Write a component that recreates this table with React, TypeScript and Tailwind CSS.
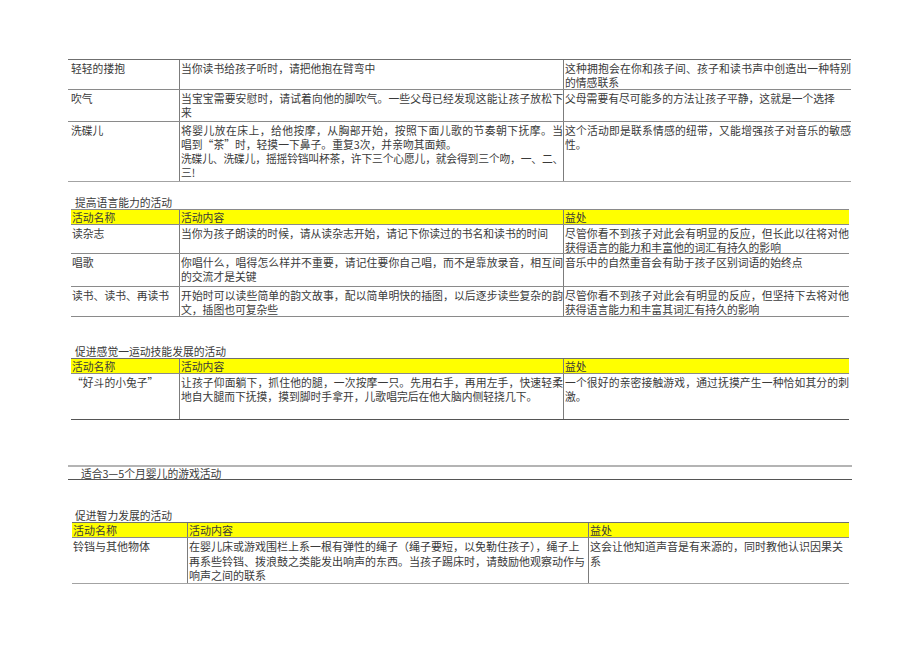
import React from "react";
import clsx from "clsx";

type Row = { h: string; cells: string[][] };

type TableSpec = {
  ml: string;
  widths: string[];
  pads: string[];
  top: string;
  bottom: string;
  text?: string;
  header?: boolean;
  rows: Row[];
  justify?: boolean;
};

const HEADER = [["活动名称"], ["活动内容"], ["益处"]];

// lines that need to be squeezed a bit to fit in the column
const TIGHT = new Set(["洗碟儿、洗碟儿，摇摇铃铛叫杯茶，许下三个心愿儿，就会得到三个吻，一、二、"]);
// short lines inside a paragraph, left as they are
const LOOSE = new Set(["唱到“茶”时，轻摸一下鼻子。重复3次，并亲吻其面颊。"]);

const table1: TableSpec = {
  ml: "ml-[68px]",
  widths: ["w-[112px]", "w-[384px]", "w-[287px]"],
  pads: ["pl-[3px]", "pl-[1px]", "pl-[1px]"],
  top: "border-[#6f6f6f]",
  bottom: "border-[#a3a3a3]",
  justify: true,
  rows: [
    {
      h: "h-[30px]",
      cells: [
        ["轻轻的搂抱"],
        ["当你读书给孩子听时，请把他抱在臂弯中"],
        ["这种拥抱会在你和孩子间、孩子和读书声中创造出一种特别", "的情感联系"],
      ],
    },
    {
      h: "h-[32px]",
      cells: [
        ["吹气"],
        ["当宝宝需要安慰时，请试着向他的脚吹气。一些父母已经发现这能让孩子放松下", "来"],
        ["父母需要有尽可能多的方法让孩子平静，这就是一个选择"],
      ],
    },
    {
      h: "h-[60px]",
      cells: [
        ["洗碟儿"],
        [
          "将婴儿放在床上，给他按摩，从胸部开始，按照下面儿歌的节奏朝下抚摩。当",
          "唱到“茶”时，轻摸一下鼻子。重复3次，并亲吻其面颊。",
          "洗碟儿、洗碟儿，摇摇铃铛叫杯茶，许下三个心愿儿，就会得到三个吻，一、二、",
          "三!",
        ],
        ["这个活动即是联系情感的纽带，又能增强孩子对音乐的敏感", "性。"],
      ],
    },
  ],
};

const table2: TableSpec = {
  ml: "ml-[71px]",
  widths: ["w-[109px]", "w-[384px]", "w-[285px]"],
  pads: ["pl-[1px]", "pl-[1px]", "pl-[1px]"],
  top: "border-[#8a8a8a]",
  bottom: "border-[#8a8a8a]",
  header: true,
  justify: true,
  rows: [
    {
      h: "h-[29px]",
      cells: [
        ["读杂志"],
        ["当你为孩子朗读的时候，请从读杂志开始，请记下你读过的书名和读书的时间"],
        ["尽管你看不到孩子对此会有明显的反应，但长此以往将对他", "获得语言的能力和丰富他的词汇有持久的影响"],
      ],
    },
    {
      h: "h-[33px]",
      cells: [
        ["唱歌"],
        ["你唱什么，唱得怎么样并不重要，请记住要你自己唱，而不是靠放录音，相互间", "的交流才是关键"],
        ["音乐中的自然重音会有助于孩子区别词语的始终点"],
      ],
    },
    {
      h: "h-[30px]",
      cells: [
        ["读书、读书、再读书"],
        ["开始时可以读些简单的韵文故事，配以简单明快的插图，以后逐步读些复杂的韵", "文，插图也可复杂些"],
        ["尽管你看不到孩子对此会有明显的反应，但坚持下去将对他", "获得语言能力和丰富其词汇有持久的影响"],
      ],
    },
  ],
};

const table3: TableSpec = {
  ml: "ml-[71px]",
  widths: ["w-[109px]", "w-[384px]", "w-[285px]"],
  pads: ["pl-[1px]", "pl-[1px]", "pl-[1px]"],
  top: "border-[#6f6f6f]",
  bottom: "border-[#555555]",
  header: true,
  justify: true,
  rows: [
    {
      h: "h-[46px]",
      cells: [
        ["“好斗的小兔子”"],
        [
          "让孩子仰面躺下，抓住他的腿，一次按摩一只。先用右手，再用左手，快速轻柔",
          "地自大腿而下抚摸，摸到脚时手拿开，儿歌唱完后在他大脑内侧轻挠几下。",
        ],
        ["一个很好的亲密接触游戏，通过抚摸产生一种恰如其分的刺", "激。"],
      ],
    },
  ],
};

const table4: TableSpec = {
  ml: "ml-[72px]",
  widths: ["w-[116px]", "w-[401px]", "w-[260px]"],
  pads: ["pl-[1px]", "pl-[1px]", "pl-[1px]"],
  top: "border-[#6f6f6f]",
  bottom: "border-[#a3a3a3]",
  text: "text-[11px] leading-[14.5px]",
  header: true,
  rows: [
    {
      h: "h-[46px]",
      cells: [
        ["铃铛与其他物体"],
        [
          "在婴儿床或游戏围栏上系一根有弹性的绳子（绳子要短，以免勒住孩子），绳子上",
          "再系些铃铛、拨浪鼓之类能发出响声的东西。当孩子踢床时，请鼓励他观察动作与",
          "响声之间的联系",
        ],
        ["这会让他知道声音是有来源的，同时教他认识因果关", "系"],
      ],
    },
  ],
};

function Cell({ w, pad, lines, last, justify }: { w: string; pad: string; lines: string[]; last: boolean; justify?: boolean }) {
  return (
    <div className={clsx(w, pad, "shrink-0 pt-[1px]", !last && "border-r border-[#7c7c7c]")}>
      {lines.map((l, i) => (
        <div
          key={i}
          className={clsx(
            "whitespace-nowrap",
            justify && i < lines.length - 1 && !LOOSE.has(l) && "[text-align-last:justify]",
            TIGHT.has(l) && "tracking-[-0.3px]"
          )}
        >
          {l}
        </div>
      ))}
    </div>
  );
}

function Table({ spec }: { spec: TableSpec }) {
  return (
    <div className={clsx(spec.ml, spec.text, "flex flex-col self-start border-t", spec.top)}>
      {spec.header && (
        <div className="flex h-[15px] bg-[#ffff00] border-b border-[#8a8a8a] leading-[14px]">
          {HEADER.map((c, i) => (
            <div key={i} className={clsx(spec.widths[i], spec.pads[i], "shrink-0", i < 2 && "border-r border-[#7c7c7c]")}>
              {c[0]}
            </div>
          ))}
        </div>
      )}
      {spec.rows.map((r, ri) => (
        <div
          key={ri}
          className={clsx(
            "flex border-b",
            r.h,
            ri === spec.rows.length - 1 ? spec.bottom : "border-[#8a8a8a]"
          )}
        >
          {r.cells.map((c, ci) => (
            <Cell key={ci} w={spec.widths[ci]} pad={spec.pads[ci]} lines={c} last={ci === 2} justify={spec.justify} />
          ))}
        </div>
      ))}
    </div>
  );
}

function Title({ children, mt }: { children: React.ReactNode; mt: string }) {
  return <div className={clsx(mt, "ml-[75px] h-[14px] leading-[14px] whitespace-nowrap")}>{children}</div>;
}

export default function App() {
  return (
    <div className="w-[920px] h-[651px] overflow-hidden bg-white pt-[59px] flex flex-col text-[10.8px] leading-[14px] text-[#3a3a3a] [font-family:'Noto_Sans_CJK_SC',sans-serif]">
      <Table spec={table1} />

      <Title mt="mt-[13px]">提高语言能力的活动</Title>
      <Table spec={table2} />

      <Title mt="mt-[27px]">促进感觉一运动技能发展的活动</Title>
      <Table spec={table3} />

      <div className="ml-[68px] w-[784px] mt-[45px] h-[15px] border-t-2 border-t-[#b4b4b4] border-b border-b-[#555555] pl-[13px] leading-[12px] whitespace-nowrap">
        适合3—5个月婴儿的游戏活动
      </div>

      <Title mt="mt-[28px]">促进智力发展的活动</Title>
      <Table spec={table4} />
    </div>
  );
}
